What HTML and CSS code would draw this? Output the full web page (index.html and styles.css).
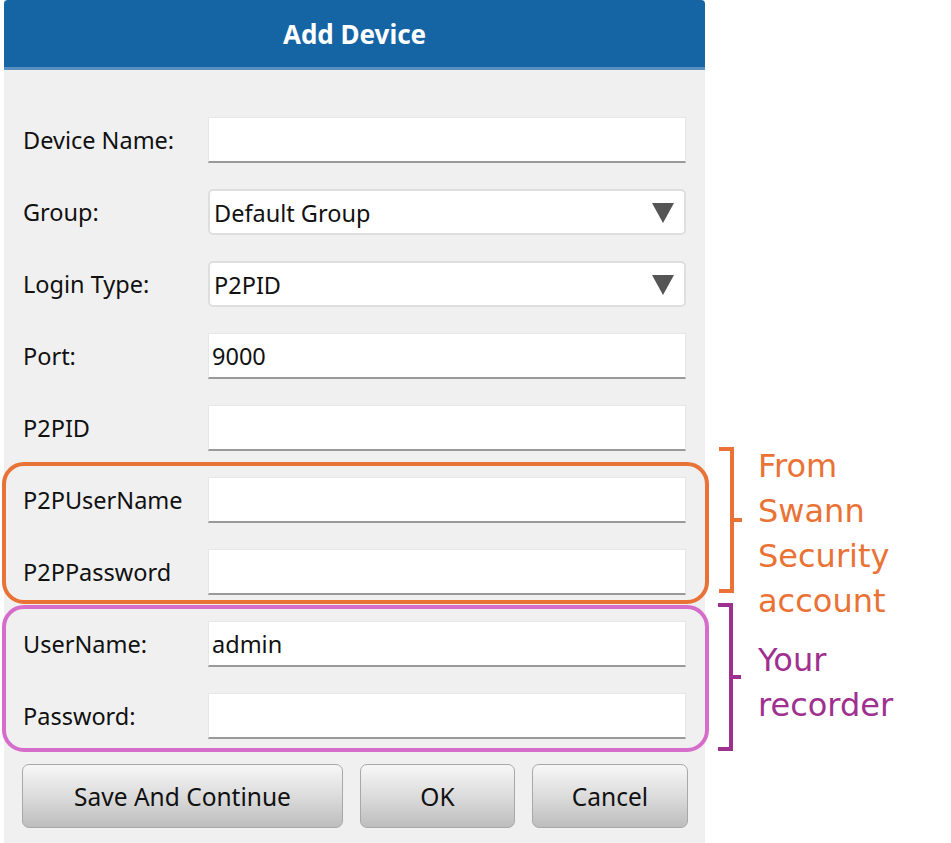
FILE: index.html
```html
<!DOCTYPE html>
<html lang="en">
<head>
    <meta charset="UTF-8">
    <title>Add Device</title>
    <link rel="stylesheet" href="styles.css">
</head>
<body>
    <div class="page">
        <div class="dialog">
            <div class="dlg_head">Add Device</div>
            <div class="dlg_body">
                <div class="row">
                    <label class="lbl">Device Name:</label>
                    <div class="field"></div>
                </div>
                <div class="row">
                    <label class="lbl">Group:</label>
                    <div class="field combo">Default Group<span class="arrow"></span></div>
                </div>
                <div class="row">
                    <label class="lbl">Login Type:</label>
                    <div class="field combo">P2PID<span class="arrow"></span></div>
                </div>
                <div class="row">
                    <label class="lbl">Port:</label>
                    <div class="field">9000</div>
                </div>
                <div class="row">
                    <label class="lbl">P2PID</label>
                    <div class="field"></div>
                </div>
                <!-- p2p account -->
                <div class="grp grp_p2p">
                    <div class="row">
                        <label class="lbl">P2PUserName</label>
                        <div class="field"></div>
                    </div>
                    <div class="row">
                        <label class="lbl">P2PPassword</label>
                        <div class="field"></div>
                    </div>
                </div>
                <!-- recorder login -->
                <div class="grp grp_rec">
                    <div class="row">
                        <label class="lbl">UserName:</label>
                        <div class="field">admin</div>
                    </div>
                    <div class="row">
                        <label class="lbl">Password:</label>
                        <div class="field"></div>
                    </div>
                </div>
                <div class="btns">
                    <button class="btn btn_save">Save And Continue</button>
                    <button class="btn btn_ok">OK</button>
                    <button class="btn btn_cancel">Cancel</button>
                </div>
            </div>
        </div>
        <div class="notes">
            <div class="note note_p2p">
                <div class="brace"></div>
                <p>From<br>Swann<br>Security<br>account</p>
            </div>
            <div class="note note_rec">
                <div class="brace"></div>
                <p>Your<br>recorder</p>
            </div>
        </div>
    </div>
</body>
</html>
```

FILE: styles.css
```css
body{margin: 0; background: #fff; font-family: "Noto Sans", "Liberation Sans", sans-serif;}
.page{display: flex; width: 951px; height: 843px; overflow: hidden;}

.dialog{width: 701px; margin-left: 4px; background: #f0f0f0; display: flex; flex-direction: column;}
.dlg_head{height: 67px; line-height: 68px; background: #1565a5; color: #fff; text-align: center;
 font-size: 26px; font-weight: bold; border-bottom: 3px solid #5b8fc0; border-radius: 4px 4px 0 0;}
.dlg_body{padding: 47px 0 0;}

.row{display: flex; align-items: center; height: 46px; margin-bottom: 26px;}
.row:last-child{margin-bottom: 0;}
.lbl{width: 204px; flex: none; padding-left: 19px; box-sizing: border-box; font-size: 23.5px; color: #111;}
.field{width: 478px; height: 46px; box-sizing: border-box; background: #fff; border: 1px solid #e6e6e6;
 border-bottom: 2px solid #9a9a9a; font-size: 23.5px; color: #111; line-height: 44px; padding-left: 3px;
 position: relative;}
.combo{border: 2px solid #dedede; border-radius: 5px; padding-left: 4px;}
.combo .arrow{position: absolute; right: 10px; top: 12px; width: 0; height: 0;
 border-left: 11px solid transparent; border-right: 11px solid transparent; border-top: 20px solid #555;}

.grp{margin: 0 -4px 0 -2px; border: 4px solid; border-radius: 22px;}
.grp .lbl{width: 202px; padding-left: 17px;}
.grp_p2p{border-color: #e97236; margin-top: -15px; padding: 11px 0 5px;}
.grp_rec{border-color: #d76dcb; margin-top: 1px; padding: 12px 0 9px;}

.btns{display: flex; gap: 17px; padding: 12px 0 0 18px;}
.btn{height: 64px; border: 1px solid #a8a8a8; border-radius: 7px; font-family: inherit; font-size: 24.5px; color: #111;
 background: linear-gradient(#f7f7f7, #dcdcdc 50%, #bdbdbd);}
.btn_save{width: 321px;}
.btn_ok{width: 155px;}
.btn_cancel{width: 156px;}

.notes{padding-top: 447px; font-family: "DejaVu Sans", sans-serif; font-size: 32px;}
.note{display: flex;}
.note p{margin: 0; line-height: 45px; padding-left: 24px;}
.brace{width: 11px; border: 4px solid; border-left: none; position: relative; margin-left: 14px;}
.brace::after{content: ""; position: absolute; right: -12px; top: 50%; margin-top: -2px; width: 8px; height: 4px; background: currentColor;}
.note_p2p{color: #ea7234; height: 146px;}
.note_p2p p{margin-top: -3px;}
.note_rec{color: #a0308f; height: 148px; margin-top: 10px;}
.note_rec .brace{margin-left: 13px;}
.note_rec p{margin-top: 35px; padding-left: 25px;}
```
